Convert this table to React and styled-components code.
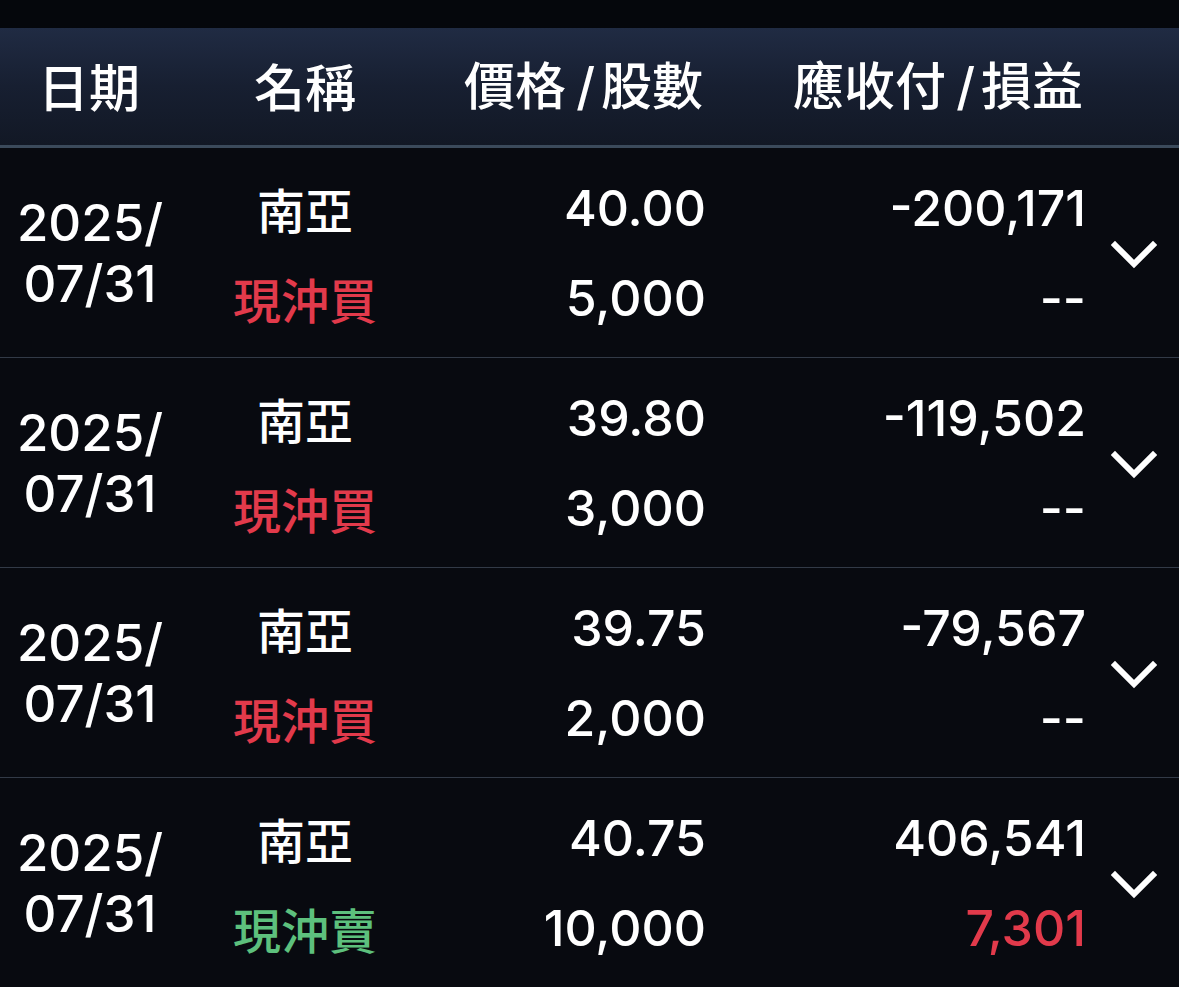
import React from 'react';
import styled, { createGlobalStyle } from 'styled-components';

const GlobalStyle = createGlobalStyle`
  html, body {
    margin: 0;
    padding: 0;
    background: #080a10;
  }
  body {
    font-family: Inter, "Noto Sans CJK TC", sans-serif;
    color: #ffffff;
  }
`;

const trades = [
  { date: ['2025/', '07/31'], name: '南亞', side: '現沖買', buy: true, price: '40.00', qty: '5,000', amount: '-200,171', pnl: '--' },
  { date: ['2025/', '07/31'], name: '南亞', side: '現沖買', buy: true, price: '39.80', qty: '3,000', amount: '-119,502', pnl: '--' },
  { date: ['2025/', '07/31'], name: '南亞', side: '現沖買', buy: true, price: '39.75', qty: '2,000', amount: '-79,567', pnl: '--' },
  { date: ['2025/', '07/31'], name: '南亞', side: '現沖賣', buy: false, price: '40.75', qty: '10,000', amount: '406,541', pnl: '7,301', pnlUp: true },
];

const Chevron = () => (
  <svg width="46" height="32" viewBox="0 0 46 32">
    <polyline points="4,6 23,25 42,6" fill="none" stroke="#fff" strokeWidth="6" strokeLinecap="square" strokeLinejoin="miter" />
  </svg>
);

const App = () => (
  <Page>
    <GlobalStyle />
    <StatusStrip />
    <Header>
      <HeadCell align="center">日期</HeadCell>
      <HeadCell align="center">名稱</HeadCell>
      <HeadCell align="right">價格<Slash>/</Slash>股數</HeadCell>
      <HeadCell align="right">應收付<Slash>/</Slash>損益</HeadCell>
      <span />
    </Header>
    {trades.map((t, i) => (
      <Row key={i}>
        <DateCell>
          <div>{t.date[0]}</div>
          <div>{t.date[1]}</div>
        </DateCell>
        <Stack align="center">
          <Line>{t.name}</Line>
          <Line tone={t.buy ? 'red' : 'green'}>{t.side}</Line>
        </Stack>
        <Stack align="flex-end">
          <Num>{t.price}</Num>
          <Num>{t.qty}</Num>
        </Stack>
        <Stack align="flex-end">
          <Num>{t.amount}</Num>
          <Num tone={t.pnlUp ? 'red' : undefined}>{t.pnl}</Num>
        </Stack>
        <Toggle>
          <Chevron />
        </Toggle>
      </Row>
    ))}
  </Page>
);

const colors = { red: '#e23a4b', green: '#5dc07d' };

const Page = styled.div`
  width: 1179px;
  min-height: 987px;
  background: #080a10;
  overflow: hidden;
`;

const StatusStrip = styled.div`
  height: 28px;
  background: #05070c;
`;

const grid = `
  display: grid;
  grid-template-columns: 178px 254px 273px 380px 1fr;
  align-items: center;
`;

const Header = styled.div`
  ${grid}
  height: 117px;
  background: linear-gradient(180deg, #202b43 0%, #171f31 50%, #121825 100%);
  border-bottom: 3px solid #3b4a5b;
  box-sizing: content-box;
`;

const HeadCell = styled.div`
  font-family: "Noto Sans CJK TC", sans-serif;
  font-size: 51px;
  font-weight: 500;
  text-align: ${p => p.align};
  padding-right: ${p => (p.align === 'right' ? '2px' : '0')};
  line-height: 1;
  padding-bottom: 3px;
`;

const Slash = styled.span`
  font-family: Inter, sans-serif;
  font-weight: 500;
  margin: 0 6px 0 10px;
`;

const Row = styled.div`
  ${grid}
  height: 209px;
  border-bottom: 1px solid #323a47;
  &:last-child {
    border-bottom: none;
  }
`;

const DateCell = styled.div`
  font-family: Inter, sans-serif;
  font-size: 51px;
  font-weight: 500;
  line-height: 61px;
  text-align: center;
  padding-left: 2px;
`;

const Stack = styled.div`
  display: flex;
  flex-direction: column;
  align-items: ${p => p.align};
`;

const Line = styled.div`
  font-family: "Noto Sans CJK TC", sans-serif;
  font-size: 48px;
  font-weight: 500;
  line-height: 90px;
  color: ${p => (p.tone ? colors[p.tone] : '#ffffff')};
`;

const Num = styled.div`
  font-family: Inter, sans-serif;
  font-size: 50px;
  font-weight: 500;
  line-height: 90px;
  margin-right: -1px;
  color: ${p => (p.tone ? colors[p.tone] : '#ffffff')};
`;

const Toggle = styled.div`
  display: flex;
  justify-content: center;
  padding-left: 4px;
  padding-top: 4px;
`;

export default App;
